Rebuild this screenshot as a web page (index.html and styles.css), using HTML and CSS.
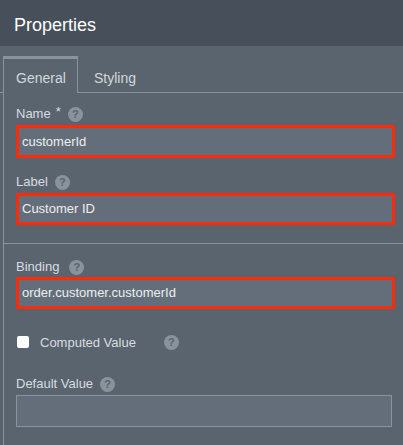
FILE: index.html
```
<!DOCTYPE html>
<html>
<head>
<meta charset="utf-8">
<link rel="stylesheet" href="styles.css">
</head>
<body>
<div class="panel">
  <div class="header">Properties</div>
  <div class="tabs">
    <div class="tab active">General</div>
    <div class="tab">Styling</div>
  </div>
  <div class="content">
    <div class="field first">
      <div class="label">Name <span class="star">*</span><span class="help">?</span></div>
      <div class="input hl tall">customerId</div>
    </div>
    <div class="field">
      <div class="label">Label<span class="help">?</span></div>
      <div class="input hl">Customer ID</div>
    </div>
    <div class="sep"></div>
    <div class="field binding">
      <div class="label">Binding<span class="help wide">?</span></div>
      <div class="input hl">order.customer.customerId</div>
    </div>
    <div class="check-row">
      <span class="checkbox"></span>
      <span class="check-text">Computed Value</span>
      <span class="help far">?</span>
    </div>
    <div class="field default">
      <div class="label">Default Value<span class="help">?</span></div>
      <div class="input plain"></div>
    </div>
  </div>
</div>
</body>
</html>
```
FILE: styles.css
```
* { box-sizing: border-box; }
html, body { margin: 0; padding: 0; }
body {
  background: #5a646e;
  font-family: "Liberation Sans", Arial, sans-serif;
  width: 403px;
  height: 445px;
  overflow: hidden;
}
.panel { background: #5a646e; min-height: 445px; }
.header {
  height: 46px;
  background: #47505a;
  color: #ffffff;
  font-size: 18px;
  line-height: 20px;
  padding: 15px 0 0 14px;
}
.tabs {
  margin-top: 10px;
  height: 37px;
  border-bottom: 1px solid #8a939b;
  display: flex;
  padding-left: 3px;
}
.tab {
  font-size: 14px;
  line-height: 16px;
  color: #d3d7db;
  padding: 14px 12px 6px 16px;
  height: 37px;
}
.tab.active {
  border-top: 3px solid #8a939b;
  border-left: 1px solid #8a939b;
  border-right: 1px solid #8a939b;
  background: #5a646e;
  padding: 11px 13px 7px 12px;
  margin-bottom: -1px;
  width: 75px;
}
.content {
  margin-left: 3px;
  border-left: 1px solid #8a939b;
  padding: 13px 8px 40px 12px;
}
.field { margin-top: 16px; }
.field.first { margin-top: 0; }
.label {
  display: flex;
  align-items: center;
  height: 16px;
  font-size: 13px;
  line-height: 16px;
  color: #d8dce0;
}
.star {
  margin-left: 5px;
  align-self: flex-start;
  font-size: 13px;
  line-height: 12px;
}
.help {
  display: inline-flex;
  align-items: center;
  justify-content: center;
  width: 15px;
  height: 15px;
  border-radius: 50%;
  background: #8a939c;
  color: #59636d;
  font-size: 11px;
  font-weight: bold;
  margin-left: 7px;
}
.help.wide { margin-left: 10px; }
.input {
  margin-top: 3px;
  height: 32px;
  background: #646e7a;
  border: 1px solid #8b949e;
  font-size: 13px;
  line-height: 16px;
  color: #eceef0;
  padding: 7px 5px;
}
.input.hl {
  border: 3px solid #ff2a0a;
  padding: 5px 3px;
}
.input.tall { height: 33px; padding-top: 6px; }
.input.plain { margin-right: 3px; }
.sep {
  height: 1px;
  background: #8a939b;
  margin: 18px -8px 0 -12px;
}
.field.binding { margin-top: 15px; }
.field.binding .input { margin-top: 2px; }
.check-row {
  display: flex;
  align-items: center;
  height: 16px;
  margin-top: 25px;
  font-size: 13px;
  color: #d8dce0;
}
.checkbox {
  width: 12px;
  height: 12px;
  background: #ffffff;
  border-radius: 2px;
  margin-left: 1px;
}
.check-text { margin-left: 11px; }
.help.far { margin-left: 28px; }
.field.default { margin-top: 26px; }
```
